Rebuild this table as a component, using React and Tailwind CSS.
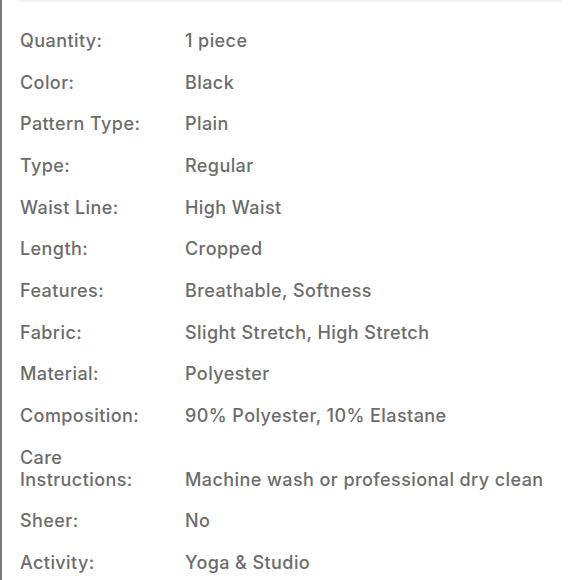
import React from 'react';

const SPECS = [
  ['Quantity:', '1 piece'],
  ['Color:', 'Black'],
  ['Pattern Type:', 'Plain'],
  ['Type:', 'Regular'],
  ['Waist Line:', 'High Waist'],
  ['Length:', 'Cropped'],
  ['Features:', 'Breathable, Softness'],
  ['Fabric:', 'Slight Stretch, High Stretch'],
  ['Material:', 'Polyester'],
  ['Composition:', '90% Polyester, 10% Elastane'],
  ['Care Instructions:', 'Machine wash or professional dry clean'],
  ['Sheer:', 'No'],
  ['Activity:', 'Yoga & Studio'],
];

export default function App() {
  return (
    <div className="w-[580px] h-[580px] bg-white overflow-hidden border-l-2 border-[#7a7a7a] font-['Inter',sans-serif] text-[#6c6c6c]">
      <div className="ml-[17px] mr-[19px] h-[2px] bg-[#f1f1f1]"></div>
      <div className="pt-[18px] pl-[18px]">
        {SPECS.map(([label, value]) => (
          <div key={label} className="flex items-end py-[9.85px] text-[18px] font-medium tracking-[0.42px] leading-[22px]">
            <span className="w-[165px] shrink-0 pr-6">{label}</span>
            <span className="whitespace-nowrap">{value}</span>
          </div>
        ))}
      </div>
    </div>
  );
}
